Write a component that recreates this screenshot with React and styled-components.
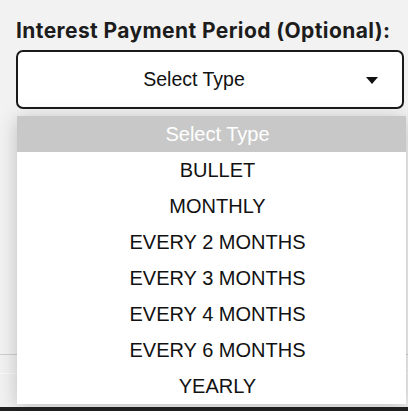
import React, { useState } from "react";
import styled, { createGlobalStyle } from "styled-components";

const GlobalStyle = createGlobalStyle`
  html, body {
    margin: 0;
    padding: 0;
    background: #f2f2f2;
    font-family: "Liberation Sans", Arial, sans-serif;
  }
`;

const options = [
  "BULLET",
  "MONTHLY",
  "EVERY 2 MONTHS",
  "EVERY 3 MONTHS",
  "EVERY 4 MONTHS",
  "EVERY 6 MONTHS",
  "YEARLY",
];

export default function App() {
  const [value, setValue] = useState("");
  const [open, setOpen] = useState(true);

  return (
    <>
      <GlobalStyle />
      <Page>
        <Field>
          <Label>Interest Payment Period (Optional):</Label>
          <SelectWrap>
            <SelectBox onClick={() => setOpen(!open)}>
              <SelectText>{value || "Select Type"}</SelectText>
              <Caret />
            </SelectBox>
            {open && (
              <Menu>
                <Option $active={value === ""} onClick={() => setValue("")}>
                  Select Type
                </Option>
                {options.map((opt) => (
                  <Option
                    key={opt}
                    $active={value === opt}
                    onClick={() => {
                      setValue(opt);
                      setOpen(false);
                    }}
                  >
                    {opt}
                  </Option>
                ))}
              </Menu>
            )}
          </SelectWrap>
        </Field>
        <Rest>
          <RowLine />
          <RowLine $light />
        </Rest>
        <Footer />
      </Page>
    </>
  );
}

const Page = styled.div`
  height: 411px;
  display: flex;
  flex-direction: column;
  overflow: hidden;
`;

const Field = styled.div`
  padding: 19px 4px 0 16px;
`;

const Label = styled.div`
  font-family: Inter, "Liberation Sans", sans-serif;
  font-size: 21px;
  font-weight: 700;
  letter-spacing: 0.4px;
  color: #1c1c1c;
  line-height: 24px;
  margin-bottom: 7px;
  white-space: nowrap;
`;

const SelectWrap = styled.div`
  position: relative;
`;

const SelectBox = styled.div`
  height: 59px;
  box-sizing: border-box;
  border: 2px solid #1a1a1a;
  border-radius: 7px;
  background: #fff;
  display: flex;
  align-items: center;
  padding: 0 24px 0 0;
  cursor: pointer;
`;

const SelectText = styled.span`
  flex: 1;
  text-align: center;
  font-size: 19.5px;
  color: #111;
  padding-left: 4px;
`;

const Caret = styled.span`
  width: 0;
  height: 0;
  margin-top: 2px;
  border-left: 6.5px solid transparent;
  border-right: 6.5px solid transparent;
  border-top: 7px solid #111;
`;

const Menu = styled.ul`
  position: absolute;
  top: 66px;
  left: 1px;
  right: -2px;
  margin: 0;
  padding: 0;
  list-style: none;
  background: #fff;
  box-shadow: 0 3px 18px rgba(0, 0, 0, 0.22);
  z-index: 10;
`;

const Option = styled.li`
  height: 36px;
  display: flex;
  align-items: center;
  justify-content: center;
  padding-left: 12px;
  font-size: 20px;
  color: ${(p) => (p.$active ? "#fff" : "#111")};
  background: ${(p) => (p.$active ? "#c8c8c8" : "#fff")};
  cursor: pointer;
`;

const Rest = styled.div`
  flex: 1;
  display: flex;
  flex-direction: column;
  padding-top: 245px;
`;

const RowLine = styled.div`
  height: 1px;
  background: ${(p) => (p.$light ? "#fbfbfb" : "#cfcfcf")};
  margin-bottom: 18px;
`;

const Footer = styled.div`
  height: 4px;
  background: #222;
`;
